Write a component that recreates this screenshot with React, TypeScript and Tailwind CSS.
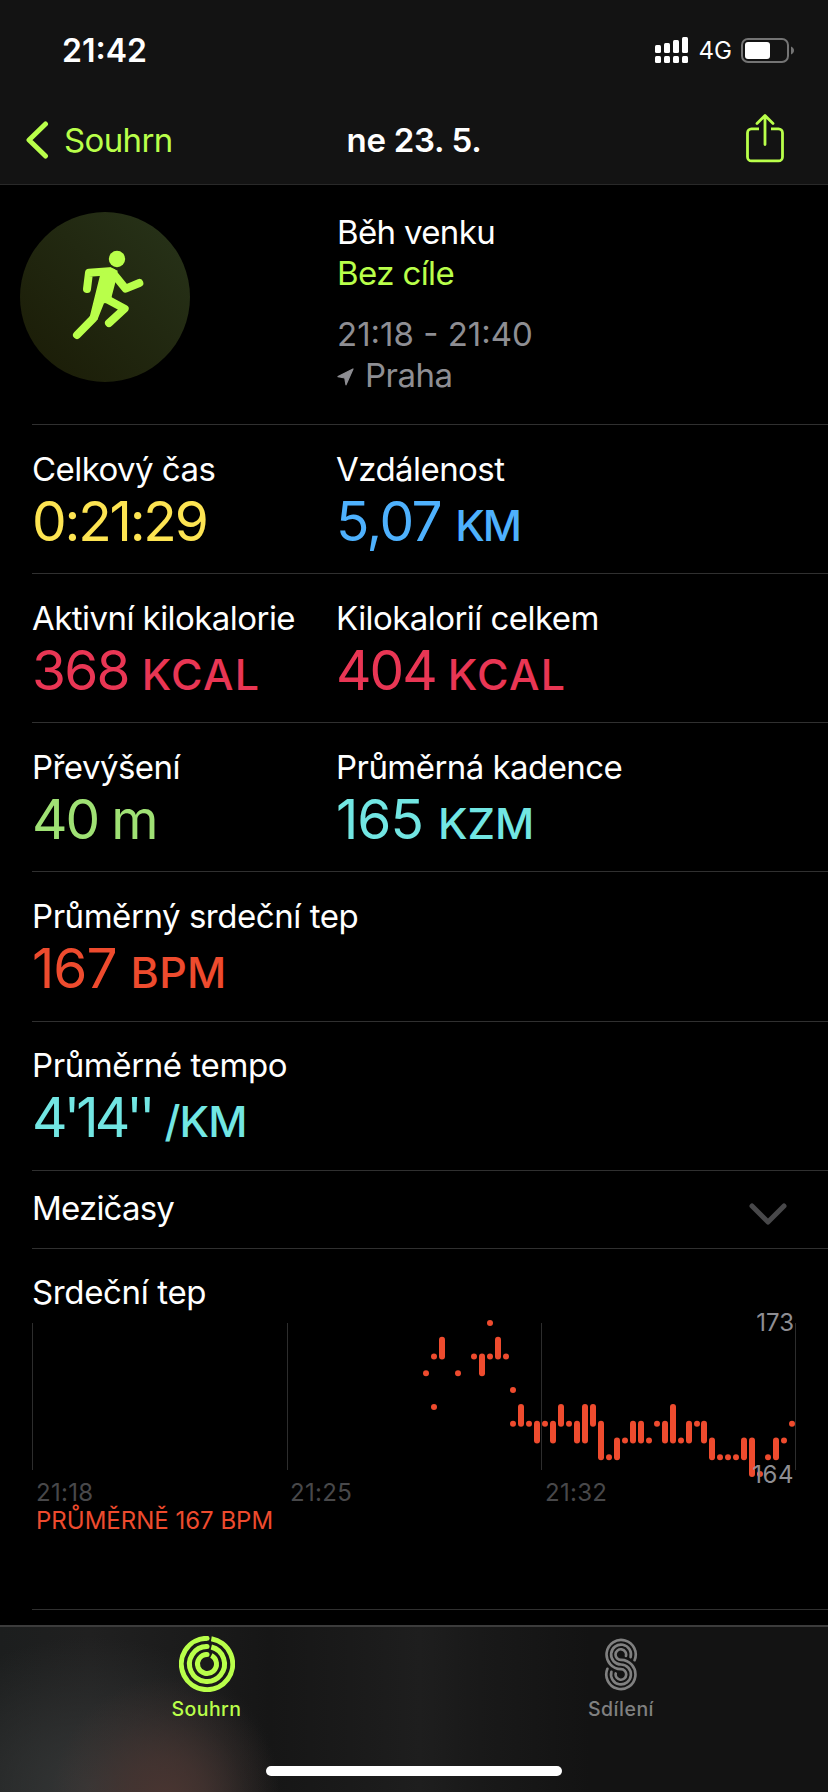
import { clsx } from "clsx";

// ── Data ────────────────────────────────────────────────────────
interface Metric {
  label: string;
  value: string;
  unit?: string;
  color: string;
  labelClass?: string;
  valueClass?: string;
  unitClass?: string;
}

const ROWS: Metric[][] = [
  [
    { label: "Celkový čas", value: "0:21:29", color: "text-[#fde452]", valueClass: "tracking-[-2.2px]" },
    { label: "Vzdálenost", value: "5,07", unit: "KM", color: "text-[#4eb1fd]", unitClass: "ml-[14px] text-[43px] font-medium tracking-[-2px]" },
  ],
  [
    { label: "Aktivní kilokalorie", value: "368", unit: "KCAL", color: "text-[#e93654]", valueClass: "tracking-[-1.8px]", unitClass: "ml-[13px] text-[43px] font-medium tracking-[1.3px]" },
    { label: "Kilokalorií celkem", value: "404", unit: "KCAL", color: "text-[#e93654]", valueClass: "tracking-[-2px]", unitClass: "ml-3 text-[43px] font-medium tracking-[1.3px]" },
  ],
  [
    { label: "Převýšení", value: "40", unit: "m", color: "text-[#9fe174]", valueClass: "tracking-[-2px]", unitClass: "ml-[13px] text-[54px]" },
    { label: "Průměrná kadence", value: "165", unit: "KZM", color: "text-[#72e6e3]", valueClass: "tracking-[-1px]", unitClass: "ml-[15px] text-[43px] font-medium" },
  ],
  [{ label: "Průměrný srdeční tep", value: "167", unit: "BPM", color: "text-[#ee4b2e]", labelClass: "tracking-[-0.45px]", valueClass: "tracking-[-1px]", unitClass: "ml-[14px] text-[43px] font-medium tracking-[0.3px]" }],
  [{ label: "Průměrné tempo", value: "4'14''", unit: "/KM", color: "text-[#72e6e3]", labelClass: "tracking-[-0.4px]", valueClass: "tracking-[-3.9px]", unitClass: "ml-[13px] text-[43px] font-medium tracking-[-0.8px]" }],
];

// [x, highest bpm, lowest bpm]
const BEATS: [number, number, number][] = [
  [394, 170, 170], [402, 171, 171], [402, 168, 168], [410, 172, 171], [426, 170, 170],
  [442, 171, 171], [450, 171, 170], [458, 173, 173], [458, 171, 171], [466, 172, 171],
  [474, 171, 171], [481, 169, 169], [481, 167, 167], [489, 168, 167], [497, 167, 167],
  [505, 167, 166], [513, 167, 167], [521, 167, 166], [529, 168, 167], [537, 167, 167],
  [545, 167, 166], [553, 168, 166], [561, 168, 167], [569, 167, 165], [577, 165, 165],
  [585, 166, 165], [593, 166, 166], [601, 167, 166], [609, 167, 166], [617, 166, 166],
  [625, 167, 167], [633, 167, 166], [641, 168, 166], [649, 166, 166], [657, 167, 166],
  [665, 167, 167], [672, 167, 166], [680, 166, 165], [688, 165, 165], [696, 165, 165],
  [704, 165, 165], [712, 166, 165], [720, 166, 164], [728, 164, 164], [736, 165, 165],
  [744, 166, 165], [752, 166, 166], [760, 167, 167],
];

const TIMES = ["21:18", "21:25", "21:32"];

// ── Icons ───────────────────────────────────────────────────────
function SignalIcon() {
  const tops = [8, 6, 3, 0];
  return (
    <svg width="33" height="26" viewBox="0 0 33 26" fill="#fff">
      {tops.map((y, i) => (
        <g key={i}>
          <rect x={i * 9} y={y} width="6" height={16 - y} rx="1.5" />
          <rect x={i * 9} y="19" width="6" height="7" rx="1.5" />
        </g>
      ))}
    </svg>
  );
}

function BatteryIcon() {
  return (
    <svg width="53" height="25" viewBox="0 0 53 25" fill="none">
      <rect x="1" y="1" width="46" height="23" rx="6" stroke="#747474" strokeWidth="2" />
      <rect x="4" y="4" width="25" height="17" rx="3" fill="#fff" />
      <path d="M50 8.5c2 1 3 2.4 3 4s-1 3-3 4z" fill="#747474" />
    </svg>
  );
}

function ShareIcon() {
  return (
    <svg width="38" height="49" viewBox="0 0 38 49" fill="none" stroke="#b9ff4a" strokeWidth="2.8" strokeLinecap="round" strokeLinejoin="round">
      <path d="M13 14.9H5.5a4 4 0 0 0-4 4v24a4 4 0 0 0 4 4h27a4 4 0 0 0 4-4v-24a4 4 0 0 0-4-4H25" strokeLinecap="butt" />
      <path d="M19 30.5V2M11 9.5l8-8 8 8" />
    </svg>
  );
}

function RunnerIcon() {
  return (
    <svg width="170" height="170" viewBox="0 0 510 510" fill="none" stroke="#b9ff4a" strokeWidth="24" strokeLinecap="round" strokeLinejoin="round">
      <circle cx="291" cy="141" r="24.5" fill="#b9ff4a" stroke="none" />
      <path d="M201 231l6-49 61-4" />
      <path d="M278 182l39 48 41-17" />
      <path d="M261 262l53 28-47 43" />
      <path d="M220 319l-49 50" />
      <path d="M241 186l30-20 22 10-5 28-12 46-4 22-20 2-20 50-24-5z" fill="#b9ff4a" stroke="none" />
    </svg>
  );
}

function RingsIcon() {
  return (
    <svg width="56" height="56" viewBox="0 0 168 168" fill="none" stroke="#b9ff4a" strokeWidth="15">
      {[77, 52.5, 28.5].map((r) => {
        const gap = 13;
        const y = 84 - Math.sqrt(r * r - gap * gap);
        return (
          <g key={r}>
            <path d={`M${84 + gap} ${y}A${r} ${r} 0 1 1 84 ${84 - r}`} />
            <circle cx="84" cy={84 - r} r="7.5" fill="#b9ff4a" stroke="none" />
          </g>
        );
      })}
    </svg>
  );
}

function SharingIcon() {
  return (
    <svg width="34" height="53" viewBox="-1 0 102 160" fill="none" stroke="#808080" strokeWidth="8" strokeLinecap="round">
      <path d="M91 67A44 44 0 1 0 50 94A16 16 0 1 1 34 107" />
      <path d="M79 58A30 30 0 1 0 50 80A30 30 0 1 1 21 102" />
      <path d="M65 54A16 16 0 1 0 50 66A44 44 0 1 1 9 93" />
    </svg>
  );
}

// ── Sections ────────────────────────────────────────────────────
function MetricCell({ metric }: { metric: Metric }) {
  return (
    <div className="whitespace-nowrap">
      <div className={clsx("text-[33px] leading-10", metric.labelClass ?? "tracking-[-0.55px]")}>{metric.label}</div>
      <div className={clsx("mt-0.5 flex h-[60px] items-baseline text-[55px] leading-[60px]", metric.color)}>
        <span className={metric.valueClass ?? "tracking-[-1.5px]"}>{metric.value}</span>
        {metric.unit && <span className={metric.unitClass}>{metric.unit}</span>}
      </div>
    </div>
  );
}

function HeartRateChart() {
  const yOf = (bpm: number) => 3 + (173 - bpm) * 16.78;
  return (
    <div className="relative h-[156px] w-[764px]">
      <svg className="overflow-visible" width="764" height="156" viewBox="0 -3 764 156">
        {[0, 255, 509, 763].map((x) => (
          <rect key={x} x={x} y="3" width="1" height="147" fill="#2d2d2d" />
        ))}
        {BEATS.map(([x, hi, lo], i) => (
          <rect key={i} x={x - 3} y={yOf(hi) - 3} width="6" height={yOf(lo) - yOf(hi) + 6} rx="3" fill="#ee4b2e" />
        ))}
      </svg>
      <span className="absolute right-[2px] top-[-8px] text-[24px] leading-7 text-[#8e8e93]">173</span>
      <span className="absolute right-[2px] top-[144px] text-[24px] leading-7 tracking-[0.5px] text-[#8e8e93]">164</span>
    </div>
  );
}

export default function App() {
  return (
    <div className="flex h-[1792px] w-[828px] flex-col overflow-hidden bg-black font-['Inter','Liberation_Sans',sans-serif] text-white">
      {/* ── Header ── */}
      <header className="h-[185px] shrink-0 border-b border-[#292929] bg-[#131313]">
        <div className="flex h-[100px] items-center pl-[62px] pr-[34px]">
          <span className="mt-0.5 text-[32px] font-semibold leading-10">21:42</span>
          <div className="ml-auto flex items-center">
            <SignalIcon />
            <span className="ml-[11px] mr-[9px] mt-0.5 text-[24px] leading-7">4G</span>
            <BatteryIcon />
          </div>
        </div>
        <div className="grid h-20 grid-cols-[1fr_auto_1fr] items-center pl-[26px] pr-11">
          <div className="flex items-center gap-[15px] text-[#b9ff4a]">
            <svg width="23" height="38" viewBox="0 0 23 38" fill="none" stroke="currentColor" strokeWidth="5" strokeLinecap="round" strokeLinejoin="round">
              <path d="M19.5 3L3 19l16.5 16" />
            </svg>
            <span className="text-[33px] leading-10 tracking-[-0.65px]">Souhrn</span>
          </div>
          <span className="ml-[18px] text-center text-[33px] font-semibold leading-10 tracking-[-0.3px]">ne 23. 5.</span>
          <div className="flex justify-end pb-1">
            <ShareIcon />
          </div>
        </div>
      </header>

      {/* ── Workout summary ── */}
      <main className="flex-1 overflow-hidden">
        <section className="flex h-[239px] pl-5 pt-[27px]">
          <div className="size-[170px] rounded-full bg-linear-to-tr from-[#1a1b06] to-[#28341a]">
            <RunnerIcon />
          </div>
          <div className="ml-[147px] text-[33px] leading-[41px]">
            <div className="tracking-[-0.65px]">Běh venku</div>
            <div className="tracking-[-0.6px] text-[#b9ff4a]">Bez cíle</div>
            <div className="mt-5 text-[#8e8e93]">21:18 - 21:40</div>
            <div className="flex items-center tracking-[-0.5px] text-[#8e8e93]">
              <svg className="mr-[11px] mt-0.5" width="17" height="18" viewBox="0 0 17 18" fill="currentColor" stroke="currentColor" strokeWidth="1.2" strokeLinejoin="round">
                <path d="M16 1L9 16.800 7.800 10 1 8.600z" />
              </svg>
              Praha
            </div>
          </div>
        </section>

        <div className="ml-8">
          {ROWS.map((row, i) => (
            <section
              key={i}
              className={clsx(
                "grid grid-cols-[304px_1fr] border-t border-[#303030]",
                i === 3 ? "h-[150px]" : "h-[149px]",
                i === 4 ? "pt-[23px]" : "pt-6"
              )}
            >
              {row.map((metric) => (
                <MetricCell key={metric.label} metric={metric} />
              ))}
            </section>
          ))}

          <section className="flex h-[78px] items-start justify-between border-t border-[#303030] pr-[41px] pt-[17px] text-[33px] leading-10 tracking-[-0.8px]">
            Mezičasy
            <svg className="mt-[15px]" width="38" height="23" viewBox="0 0 38 23" fill="none" stroke="#48484a" strokeWidth="5" strokeLinecap="round" strokeLinejoin="round">
              <path d="M3 3l16 16L35 3" />
            </svg>
          </section>

          <section className="h-[361px] border-t border-[#303030] pt-[23px]">
            <h2 className="mb-[5px] text-[33px] leading-10 tracking-[-0.35px]">Srdeční tep</h2>
            <HeartRateChart />
            <div className="mt-1.5 grid grid-cols-[254px_255px_1fr] pl-1 text-[24px] leading-7 tracking-[0.3px] text-[#48484a]">
              {TIMES.map((time) => (
                <span key={time}>{time}</span>
              ))}
            </div>
            <div className="pl-1 text-[24px] leading-7 text-[#ee4b2e]">PRŮMĚRNĚ 167 BPM</div>
          </section>
          <div className="border-t border-[#303030]" />
        </div>
      </main>

      {/* ── Tab bar ── */}
      <nav className="flex h-[167px] shrink-0 flex-col items-center border-t-2 border-[#3c3c3c] bg-[#131313] bg-[radial-gradient(ellipse_115px_125px_at_166px_175px,#4a3531_0%,#4a3531b3_35%,#4a353140_70%,#4a353100_100%),radial-gradient(ellipse_190px_150px_at_90px_160px,#343636_0%,#343636a0_40%,#34363600_100%),linear-gradient(90deg,#1c1e1e_0px,#202020_90px,#1b1b1b_190px,#161616_270px,#1a1a1a_350px,#1e1e1e_420px,#191919_480px,#131313_590px)]">
        <div className="grid h-[139px] w-full grid-cols-2">
          <div className="flex flex-col items-center pr-px pt-[9px] text-[#b9ff4a]">
            <RingsIcon />
            <span className="mt-[5px] text-[19.5px] font-medium leading-6 tracking-[0.4px]">Souhrn</span>
          </div>
          <div className="flex flex-col items-center pt-[11px] text-[#808080]">
            <SharingIcon />
            <span className="mt-1.5 text-[19.5px] font-medium leading-6 tracking-[0.5px]">Sdílení</span>
          </div>
        </div>
        <div className="h-2.5 w-[296px] shrink-0 rounded-full bg-white" />
      </nav>
    </div>
  );
}
